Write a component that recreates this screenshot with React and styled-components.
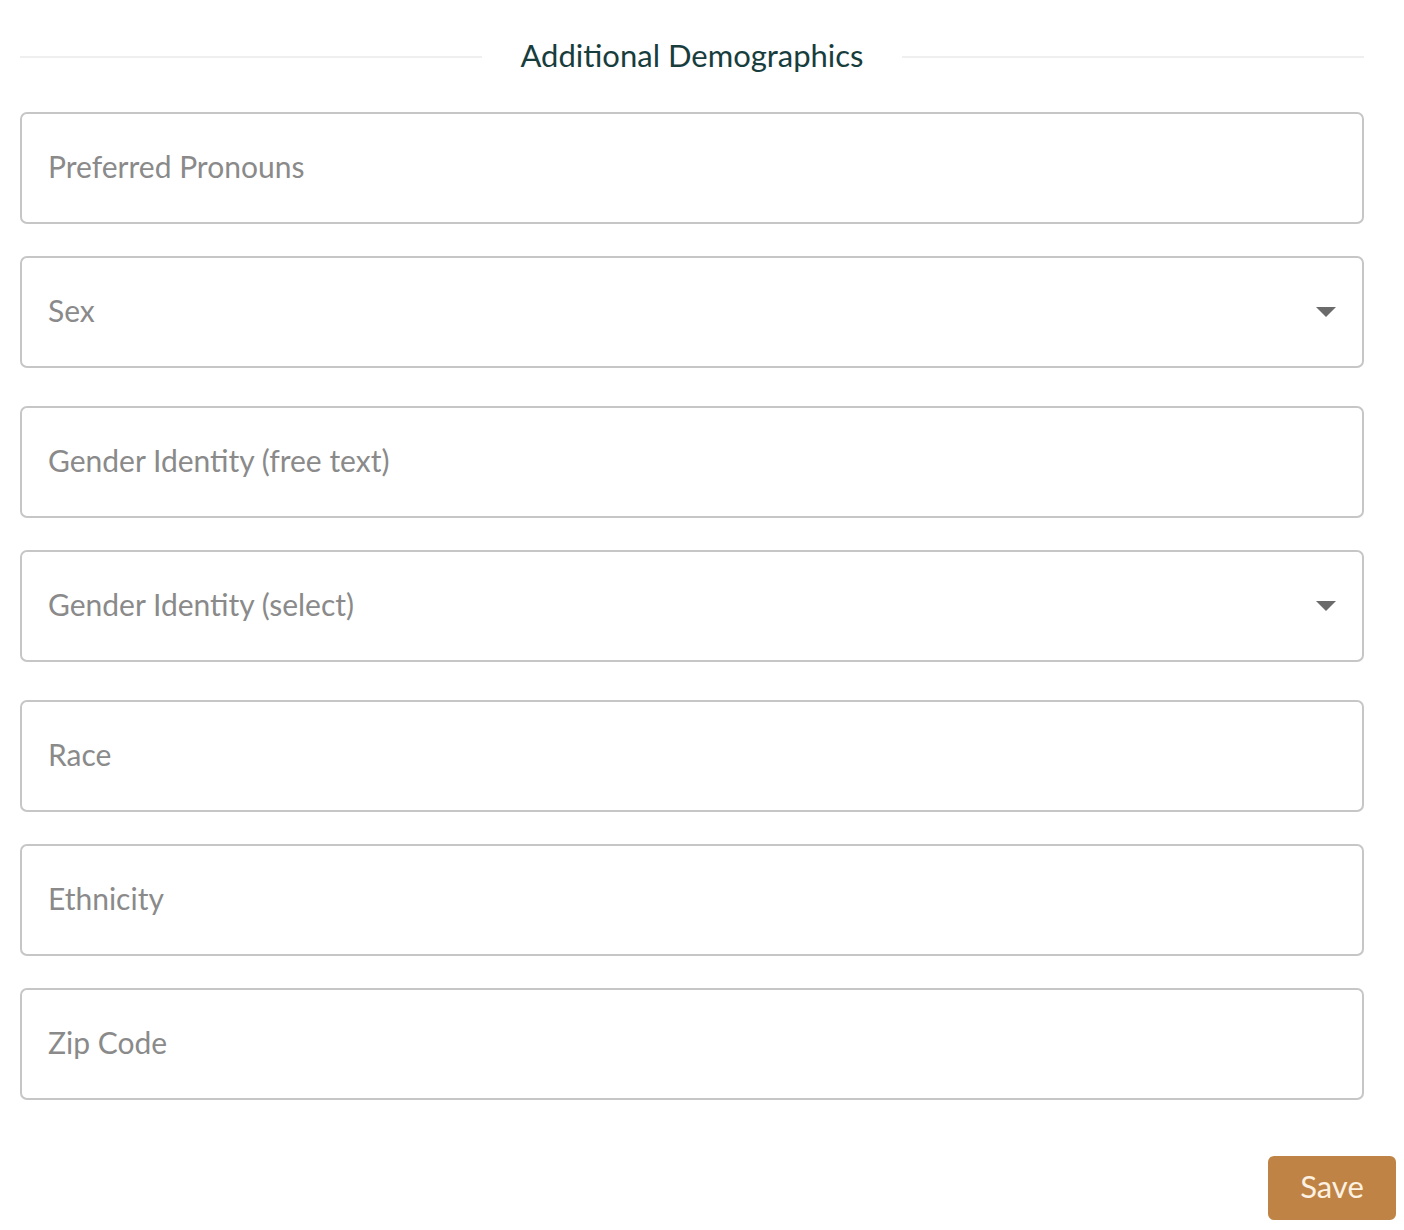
import React from 'react'
import styled, { createGlobalStyle } from 'styled-components'

const GlobalStyle = createGlobalStyle`
  body {
    margin: 0;
    background: #ffffff;
    font-family: Lato, "Open Sans", sans-serif;
  }
`

const fields = [
  { label: 'Preferred Pronouns' },
  { label: 'Sex', select: true },
  { label: 'Gender Identity (free text)' },
  { label: 'Gender Identity (select)', select: true },
  { label: 'Race' },
  { label: 'Ethnicity' },
  { label: 'Zip Code' },
]

function App() {
  return (
    <Page>
      <GlobalStyle />
      <Form>
        <SectionHeader>
          <Rule />
          <Title>Additional Demographics</Title>
          <Rule />
        </SectionHeader>
        <Fields>
          {fields.map(f =>
            f.select ? (
              <SelectBox key={f.label}>
                <Placeholder>{f.label}</Placeholder>
                <Caret />
              </SelectBox>
            ) : (
              <TextInput key={f.label} placeholder={f.label} type='text' />
            )
          )}
        </Fields>
      </Form>
      <Footer>
        <SaveButton>Save</SaveButton>
      </Footer>
    </Page>
  )
}

const Page = styled.div`
  width: 1376px;
  padding: 20px 0 10px 20px;
`

const Form = styled.div`
  width: 1344px;
`

const SectionHeader = styled.div`
  display: flex;
  align-items: center;
  gap: 38px;
  height: 72px;
`

const Rule = styled.div`
  flex: 1;
  height: 2px;
  margin-top: 2px;
  background: #efefef;
`

const Title = styled.h2`
  margin: 0 0 2px;
  font-weight: 400;
  font-size: 31px;
  color: #183d3d;
`

const Fields = styled.div`
  display: flex;
  flex-direction: column;
  gap: 32px;
  margin-top: 20px;
`

const fieldBase = `
  box-sizing: border-box;
  width: 100%;
  height: 112px;
  border: 2px solid #c6c6c6;
  border-radius: 7px;
  background: #fff;
  padding: 0 26px 5px;
  font-family: Lato, "Open Sans", sans-serif;
  font-size: 30px;
  color: #333;
`

const TextInput = styled.input`
  ${fieldBase}
  outline: 0;
  &::placeholder {
    color: #8a8a8a;
  }
`

const SelectBox = styled.div`
  ${fieldBase}
  display: flex;
  align-items: center;
  justify-content: space-between;
  margin: 0 0 6px;
  cursor: pointer;
`

const Placeholder = styled.span`
  color: #8a8a8a;
`

const Caret = styled.span`
  width: 0;
  height: 0;
  margin: 5px 0 0;
  border-left: 10px solid transparent;
  border-right: 10px solid transparent;
  border-top: 10px solid #6b6b6b;
`

const Footer = styled.div`
  display: flex;
  justify-content: flex-end;
  margin-top: 56px;
`

const SaveButton = styled.button`
  width: 128px;
  height: 64px;
  padding: 0 0 4px;
  border: 0;
  border-radius: 6px;
  background: #bf8445;
  color: #fdf1e2;
  font-family: Lato, "Open Sans", sans-serif;
  font-size: 31px;
  cursor: pointer;
`

export default App
